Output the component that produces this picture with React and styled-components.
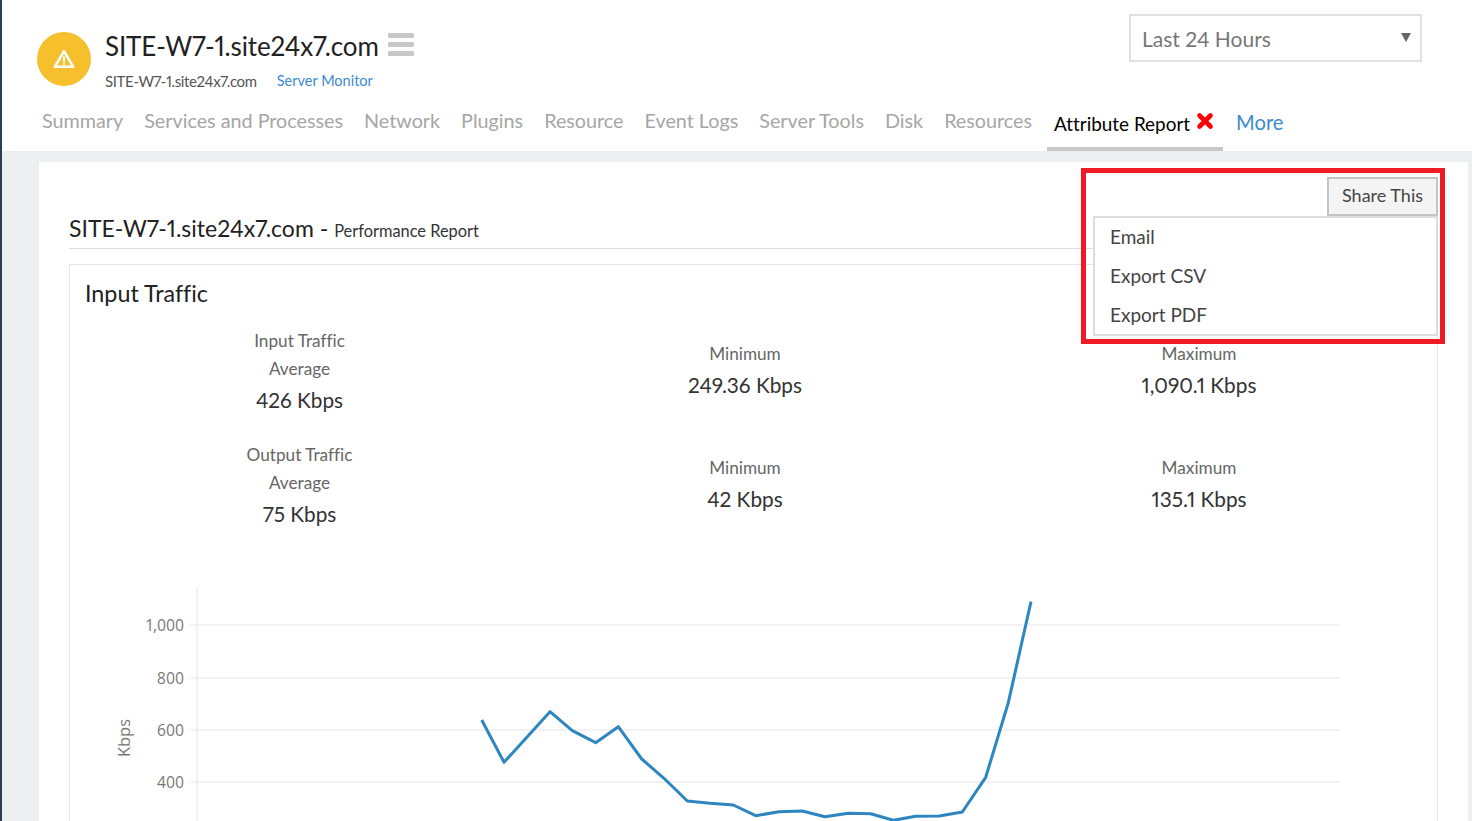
import React from "react";
import styled, { createGlobalStyle } from "styled-components";

const Global = createGlobalStyle`
  html, body { margin: 0; padding: 0; height: 100%; overflow: hidden; }
  body {
    font-family: Lato, "Open Sans", "Liberation Sans", sans-serif; background: #eceef0;
    font-variant-ligatures: none; font-variant-numeric: proportional-nums;
  }
  * { box-sizing: border-box; }
`;
const Page = styled.div`
  width: 1472px; height: 821px; overflow: hidden; border-left: 2px solid #2c3e50;
  background: #eceef0; display: flex; flex-direction: column;
`;
const Header = styled.header`
  background: #fff; height: 151px; flex: none; display: flex; flex-direction: column;
`;
const TopRow = styled.div`
  display: flex; justify-content: space-between; align-items: flex-start;
  height: 104px; padding: 14px 50px 0 35px;
`;
const Identity = styled.div`display: flex; align-items: flex-start; gap: 14px; padding-top: 18px;`;
const StatusBadge = styled.div`
  width: 54px; height: 54px; border-radius: 50%; background: #f6c02c;
  display: flex; align-items: center; justify-content: center;
`;
const Names = styled.div`display: flex; flex-direction: column; margin-top: -3px;`;
const TitleRow = styled.div`display: flex; align-items: center; gap: 9px; height: 34px;`;
const SiteName = styled.h1`margin: 0; font-size: 26px; font-weight: 400; letter-spacing: -0.14px; color: #222; white-space: nowrap;`;
const Burger = styled.div`
  width: 26px; display: flex; flex-direction: column; gap: 4px; margin-top: -3px;
  span { display: block; height: 5px; background: #c8c8c8; border-radius: 1px; }
`;
const SubRow = styled.div`display: flex; gap: 20px; margin-top: 9px; line-height: 18px;`;
const SubName = styled.span`color: #555; font-size: 15px; letter-spacing: -0.36px;`;
const SubType = styled.span`color: #3b8bd0; font-size: 14.5px;`;
const RangeSelect = styled.div`
  width: 293px; height: 48px; border: 2px solid #e0e0e0; display: flex; align-items: center;
  justify-content: space-between; padding: 0 9px 0 11px; font-size: 21px; color: #777;
`;
const SelectArrow = styled.span`
  width: 0; height: 0; border-left: 5px solid transparent; border-right: 5px solid transparent;
  border-top: 9px solid #666; margin-top: -2px;
`;
const Tabs = styled.nav`display: flex; align-items: flex-start; padding-left: 33px; height: 47px;`;
const Tab = styled.div`
  font-size: 19.75px; color: #a6a6a6; padding: 5px 7px 0; margin-right: 7px; white-space: nowrap; height: 47px;
`;
const ActiveTab = styled.div`
  display: flex; gap: 6px; padding: 8px 9px 0 7px; height: 47px; margin: 0 13px 0 1px;
  border-bottom: 4px solid #c8c8c8; color: #000; font-size: 18.9px; white-space: nowrap; align-items: flex-start;
`;
const MoreTab = styled.div`font-size: 20.2px; color: #3b8bd0; padding-top: 6px;`;
const Main = styled.main`flex: 1; padding: 11px 4px 0 37px; min-height: 0;`;
const Panel = styled.section`
  position: relative; background: #fff; height: 100%; padding: 50px 30px 0 30px; overflow: hidden;
`;
const ReportTitle = styled.div`
  display: flex; align-items: baseline; height: 37px; border-bottom: 1px solid #ddd; padding-top: 2px; color: #222;
  font-size: 23px; white-space: pre;
  small { font-size: 16.4px; color: #333; }
`;
const Card = styled.article`
  margin-top: 15px; border: 1px solid #e6e6e6; border-bottom: 0; padding: 13px 15px 0; height: 600px;
`;
const CardTitle = styled.h2`margin: 0 0 6px; font-size: 23.3px; font-weight: 400; color: #222; line-height: 30px;`;
const Stats = styled.div`display: grid; grid-template-columns: 429px 462px 446px; margin-bottom: 45px;`;
const Stat = styled.div`
  height: 114px; display: flex; flex-direction: column; align-items: center; justify-content: center; text-align: center;
  padding-bottom: ${(p) => (p.$single ? "2px" : "0")};
`;
const StatLabel = styled.div`font-size: 17.2px; color: #666; line-height: 28px;`;
const StatValue = styled.div`font-size: 20.8px; color: #333; line-height: 32px; padding-top: 1px;`;
const Chart = styled.svg`display: block; margin-left: -15px; overflow: visible;`;
const Annotation = styled.div`
  position: absolute; left: 1042px; top: 6px; width: 364px; height: 176px; border: 5px solid #ed1c24;
  display: flex; flex-direction: column; align-items: flex-end; padding: 4px 2px 0 7px;
`;
const ShareButton = styled.button`
  width: 111px; height: 39px; border: 2px solid #c4c4c4; background: #f4f4f4; color: #444;
  font: 400 18px Lato, sans-serif; padding: 0 0 4px; flex: none;
`;
const ShareMenu = styled.ul`
  list-style: none; margin: 0; padding: 1px 0 0; width: 100%; height: 120px; background: #fff; border: 2px solid #ddd;
`;
const ShareItem = styled.li`height: 39px; line-height: 35px; padding-left: 15px; font-size: 19px; color: #444;`;

const points = "411.7,133 434,175.3 457.3,149.7 480,124.7 502.3,143.7 525.7,155.7 548.3,139.7 571.7,172 594,191.3 617.3,214 640,216.3 663.3,218 685.7,228.7 709,224.7 732.3,224 755,229.7 778.3,226.3 800.7,226.7 823.3,233.3 845.7,229.3 869.3,229 892.3,225 915.7,190.3 938.3,115.7 961,14.7";
const ticks = [["1,000", 38], ["800", 91], ["600", 143], ["400", 195]];

const stats = [
  [["Input Traffic", "Average"], "426 Kbps"], [["Minimum"], "249.36 Kbps"], [["Maximum"], "1,090.1 Kbps"],
  [["Output Traffic", "Average"], "75 Kbps"], [["Minimum"], "42 Kbps"], [["Maximum"], "135.1 Kbps"],
];
const tabs = ["Summary", "Services and Processes", "Network", "Plugins", "Resource", "Event Logs", "Server Tools", "Disk", "Resources"];

export default function App() {
  return (
    <Page>
      <Global />
      <Header>
        <TopRow>
          <Identity>
            <StatusBadge>
              <svg width="22" height="22" viewBox="0 0 24 24">
                <path d="M12 3.5 22 20.5H2Z" fill="none" stroke="#fff" strokeWidth="2.8" strokeLinejoin="round" />
                <path d="M12 9v6M12 16.2v2.2" stroke="#fff" strokeWidth="2.3" />
              </svg>
            </StatusBadge>
            <Names>
              <TitleRow>
                <SiteName>SITE-W7-1.site24x7.com</SiteName>
                <Burger><span /><span /><span /></Burger>
              </TitleRow>
              <SubRow>
                <SubName>SITE-W7-1.site24x7.com</SubName>
                <SubType>Server Monitor</SubType>
              </SubRow>
            </Names>
          </Identity>
          <RangeSelect>Last 24 Hours<SelectArrow /></RangeSelect>
        </TopRow>
        <Tabs>
          {tabs.map((t) => <Tab key={t}>{t}</Tab>)}
          <ActiveTab>
            Attribute Report
            <svg width="18" height="18" viewBox="0 0 18 18">
              <path d="M3.5 3.5 14.5 14.5M14.5 3.5 3.5 14.5" stroke="#f00" strokeWidth="4.6" strokeLinecap="round" />
            </svg>
          </ActiveTab>
          <MoreTab>More</MoreTab>
        </Tabs>
      </Header>
      <Main>
        <Panel>
          <ReportTitle>SITE-W7-1.site24x7.com - <small>Performance Report</small></ReportTitle>
          <Card>
            <CardTitle>Input Traffic</CardTitle>
            <Stats>
              {stats.map(([labels, value], i) => (
                <Stat key={i} $single={labels.length === 1}>
                  {labels.map((l) => <StatLabel key={l}>{l}</StatLabel>)}
                  <StatValue>{value}</StatValue>
                </Stat>
              ))}
            </Stats>
            <Chart width="1300" height="240" viewBox="0 0 1300 240">
              {ticks.map(([label, y]) => (
                <g key={label}>
                  <line x1="120" x2="1270" y1={y} y2={y} stroke="#eee" strokeWidth="1.5" />
                  <text x="114" y={y + 6} textAnchor="end" fontSize="15.5" fill="#777" fontFamily="Open Sans, sans-serif">{label}</text>
                </g>
              ))}
              <line x1="127" x2="127" y1="0" y2="240" stroke="#eee" strokeWidth="1.5" />
              <text transform="translate(60 151) rotate(-90)" textAnchor="middle" fontSize="16.5" fill="#777" fontFamily="Open Sans, sans-serif">Kbps</text>
              <polyline points={points} fill="none" stroke="#2e86c1" strokeWidth="3" strokeLinejoin="round" />
            </Chart>
          </Card>
          <Annotation>
            <ShareButton>Share This</ShareButton>
            <ShareMenu>
              <ShareItem>Email</ShareItem>
              <ShareItem>Export CSV</ShareItem>
              <ShareItem>Export PDF</ShareItem>
            </ShareMenu>
          </Annotation>
        </Panel>
      </Main>
    </Page>
  );
}
